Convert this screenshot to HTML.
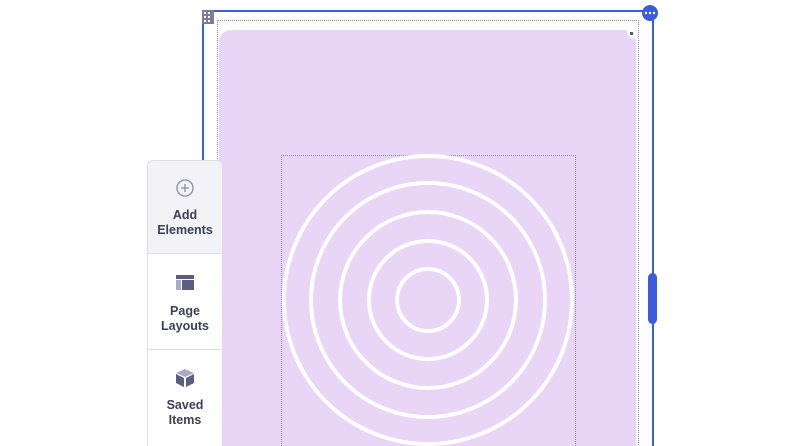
<!DOCTYPE html><html><head><style>
html,body{margin:0;width:812px;height:446px;background:#fff;position:relative;overflow:hidden;font-family:"Liberation Sans",sans-serif}
.a{position:absolute}
.card{position:absolute;left:147px;width:74px;background:#fff;z-index:5;border-left:1px solid #dcdde6;border-right:1px solid #dcdde6;text-align:center;color:#3d3f55;font-size:12.5px;line-height:15px;font-weight:bold}
</style></head><body>
<div class="a" style="left:202px;top:10px;width:448px;height:450px;border:2px solid #3b5ddd;border-bottom:none"></div>
<div class="a" style="left:217px;top:20px;width:420px;height:440px;border:1px dotted #8a8aa8;border-bottom:none"></div>
<div class="a" style="left:219px;top:30px;width:417px;height:430px;background:#e9d5f6;border-radius:12px"></div>
<div class="a" style="left:627px;top:28px;width:11px;height:11px;background:#fff;border-radius:0 0 0 8px"></div>
<div class="a" style="left:630px;top:32px;width:3px;height:3px;background:#56577a"></div>
<div class="a" style="left:281px;top:155px;width:293px;height:300px;border:1px dotted #8a8aa8;border-bottom:none"></div>
<svg class="a" style="left:0;top:0" width="812" height="446">
<g fill="none" stroke="#fff" stroke-width="4">
<circle cx="428" cy="300" r="144"/><circle cx="428" cy="300" r="117"/><circle cx="428" cy="300" r="88"/><circle cx="428" cy="300" r="59"/><circle cx="428" cy="300" r="31"/>
</g>
<circle cx="650" cy="13" r="8" fill="#3b5ddd"/>
<circle cx="646" cy="13" r="1.2" fill="#fff"/><circle cx="650" cy="13" r="1.2" fill="#fff"/><circle cx="654" cy="13" r="1.2" fill="#fff"/>
<rect x="648" y="273" width="9" height="51" rx="4.5" fill="#3b5ddd"/>
<rect x="202" y="10" width="12" height="14" fill="#7b7d99"/>
<g fill="#fff"><rect x="204" y="12" width="2" height="2"/><rect x="208" y="12" width="2" height="2"/><rect x="204" y="16" width="2" height="2"/><rect x="208" y="16" width="2" height="2"/><rect x="204" y="20" width="2" height="2"/><rect x="208" y="20" width="2" height="2"/></g>
</svg>
<div class="card" style="top:160px;height:93px;background:#f3f3f7;border-top:1px solid #dcdde6;border-radius:6px 6px 0 0">
<svg width="20" height="20" style="margin-top:17px"><circle cx="10" cy="10" r="8" fill="none" stroke="#8a8ca4" stroke-width="1.3"/><path d="M10 6v8M6 10h8" stroke="#8a8ca4" stroke-width="1.3"/></svg>
<div style="margin-top:6px">Add<br>Elements</div></div>
<div class="card" style="top:253px;height:96px;border-top:1px solid #dcdde6">
<svg width="20" height="18" style="margin-top:20px"><rect x="1" y="1" width="18" height="4" fill="#5b5e7e"/><rect x="1" y="6" width="5" height="10" fill="#a8abc3"/><rect x="7" y="6" width="12" height="10" fill="#5b5e7e"/></svg>
<div style="margin-top:8px">Page<br>Layouts</div></div>
<div class="card" style="top:349px;height:100px;border-top:1px solid #dcdde6">
<svg width="22" height="22" style="margin-top:17px"><path d="M11 2l9 4-9 4-9-4z" fill="#a8abc3"/><path d="M2 7l8 4v9l-8-4z" fill="#5b5e7e"/><path d="M20 7l-8 4v9l8-4z" fill="#5b5e7e"/></svg>
<div style="margin-top:5px">Saved<br>Items</div></div>
</body></html>
